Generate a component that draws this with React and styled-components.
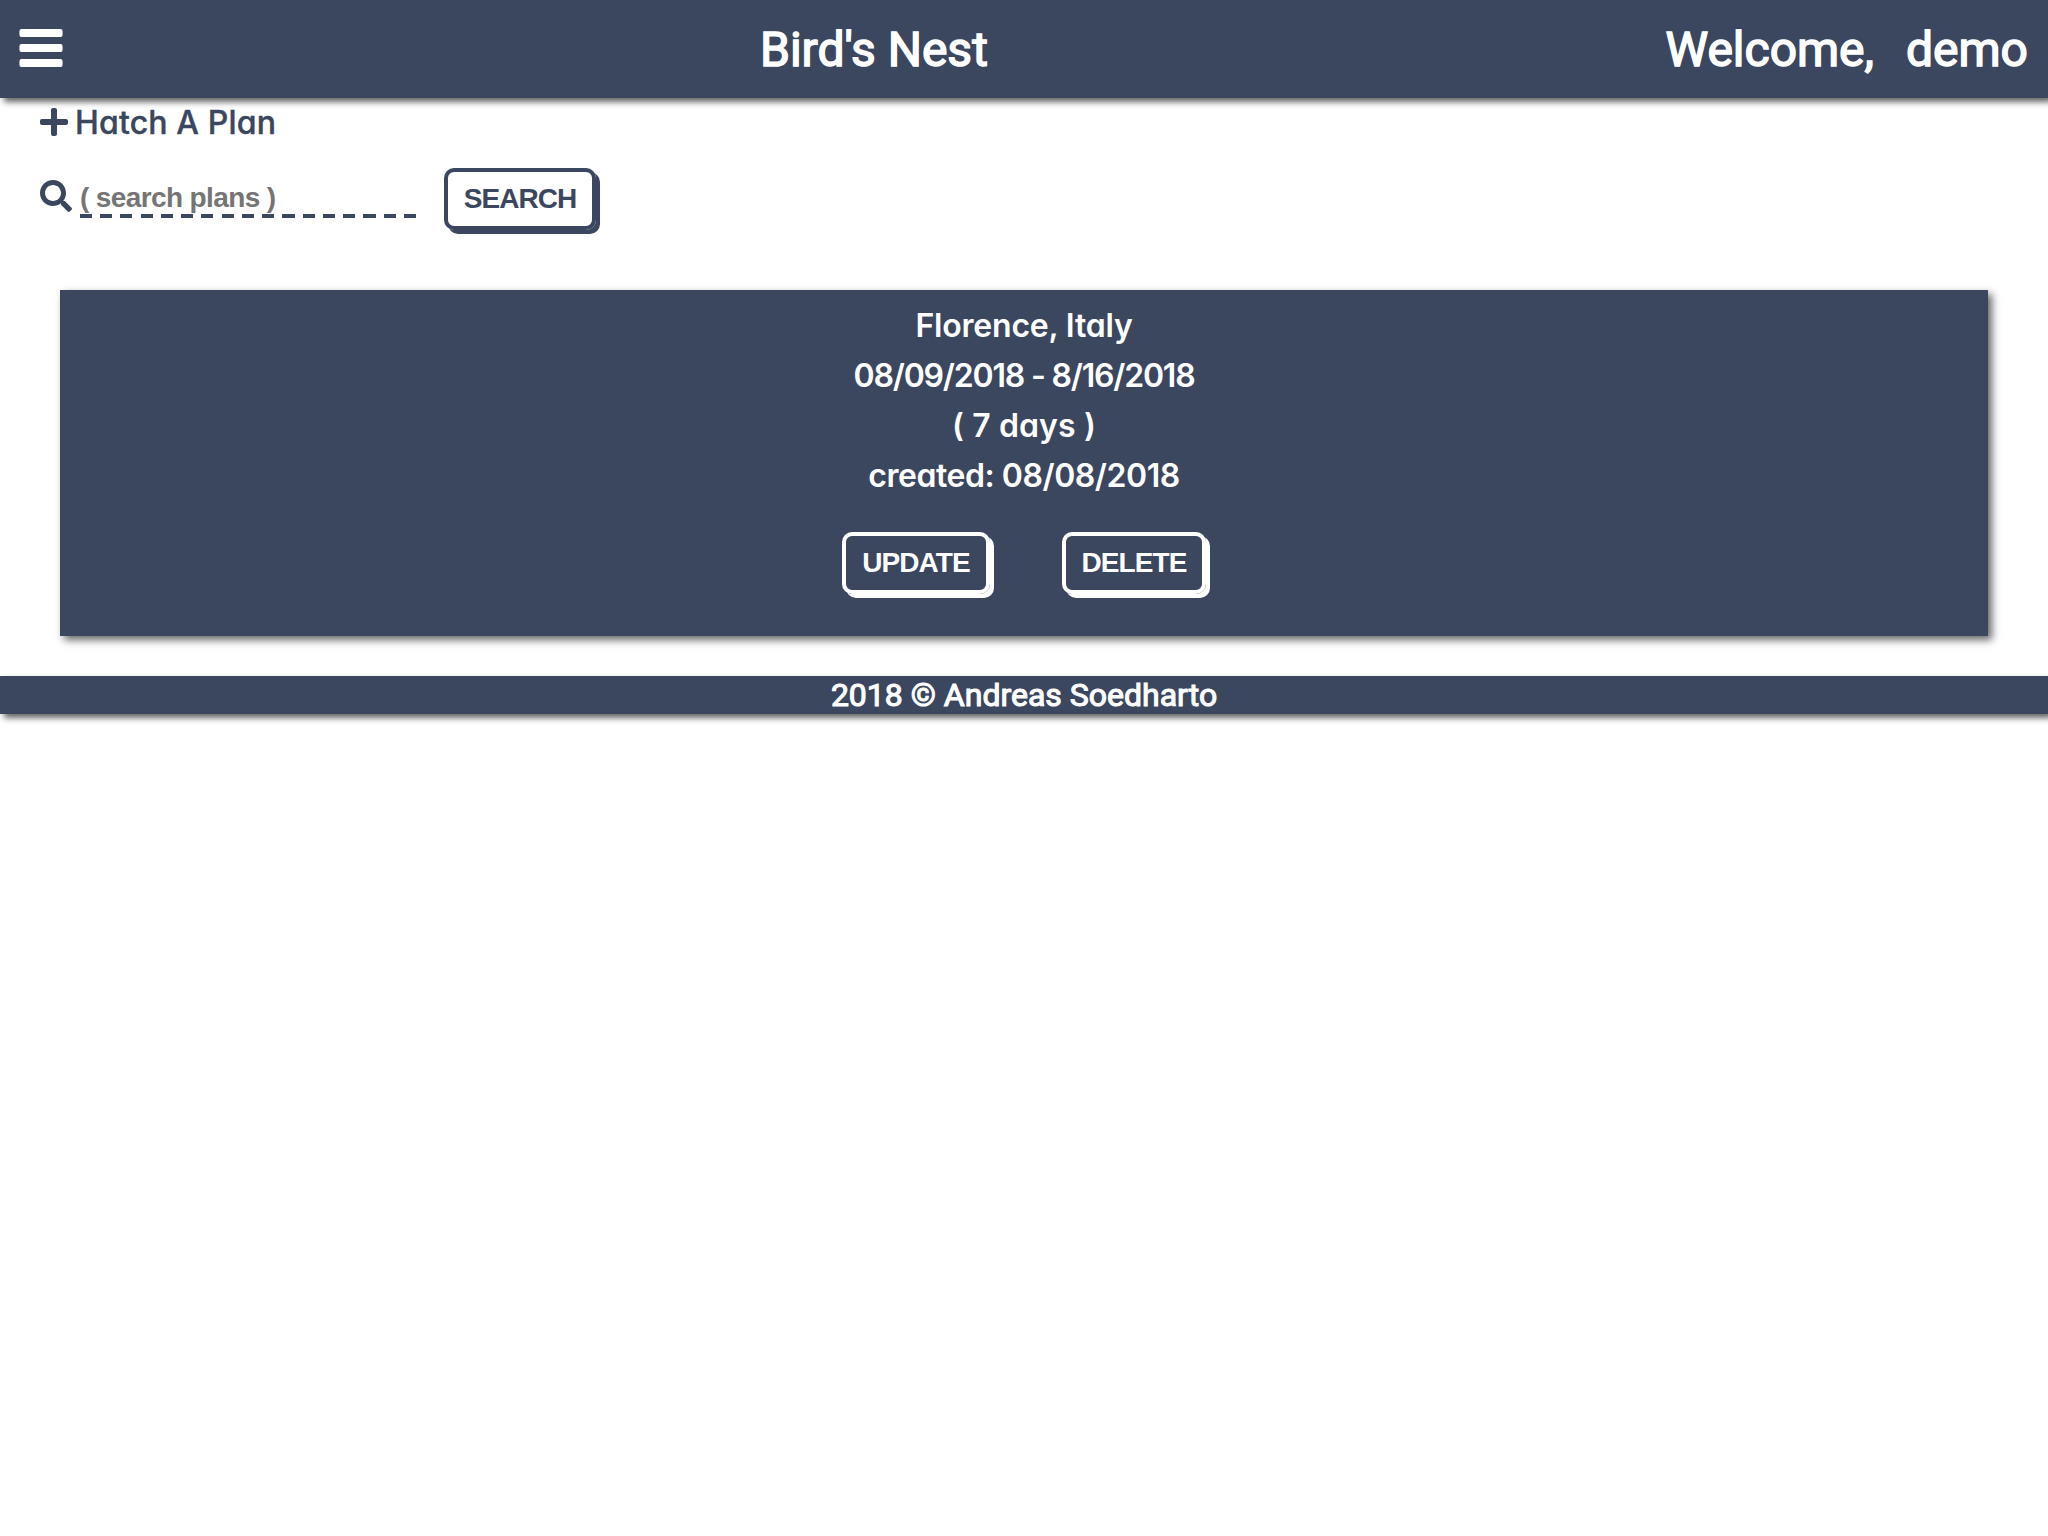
import React from "react";
import styled, { createGlobalStyle } from "styled-components";
import { FaPlus, FaSearch, FaBars } from "react-icons/fa";

const navy = "#3b465f";

const GlobalStyle = createGlobalStyle`
  * { box-sizing: border-box; }
  html { background: #fff; }
  body { margin: 0; min-height: 100vh; color: ${navy}; overflow-x: hidden; }
`;

const Header = styled.header`
  display: flex;
  align-items: center;
  height: 98px;
  padding: 0 20px;
  background: ${navy};
  color: #fff;
  font: 400 48px/56px Roboto, sans-serif;
  -webkit-text-stroke: 1.5px #fff;
  box-shadow: 4px 4px 6px #666;
`;

const MenuButton = styled.button`
  display: flex;
  padding: 0 0 2px;
  border: 0;
  background: none;
  color: #fff;
  svg { width: 42px; height: 48px; overflow: visible; stroke: #fff; stroke-width: 12px; }
`;

const Title = styled.div`
  margin-left: 698px;
  padding-top: 2px;
  white-space: nowrap;
`;

const Greeting = styled.div`
  display: flex;
  gap: 32px;
  margin-left: auto;
  padding-top: 2px;
`;

const HatchLink = styled.a`
  display: flex;
  align-items: center;
  gap: 7px;
  height: 48px;
  padding-left: 40px;
  font: 500 32px/48px Inter, sans-serif;
  font-feature-settings: "cv11";
  -webkit-text-stroke: 0.4px ${navy};
  letter-spacing: ${(p) => p.$track}px;
  white-space: nowrap;
  svg { width: 28px; height: 32px; }
  span { padding-top: 2px; }
`;

const SearchForm = styled.form`
  display: flex;
  align-items: flex-start;
  height: 66px;
  margin-top: 22px;
  padding-left: 40px;
`;

const SearchIcon = styled(FaSearch)`
  width: 32px;
  height: 32px;
  margin-top: 12px;
`;

const SearchInput = styled.input`
  width: 336px;
  height: 36px;
  margin: 14px 28px 0 8px;
  padding: 0 0 4px;
  border: 0;
  outline: 0;
  color: ${navy};
  font: 700 28px/32px "Liberation Sans", sans-serif;
  letter-spacing: -0.62px;
  background: repeating-linear-gradient(90deg, ${navy} 0 12px, transparent 12px 20.25px) left bottom / 100% 4px no-repeat;
  &::placeholder { color: #757575; opacity: 1; }
`;

const Button = styled.button`
  width: ${(p) => p.$width}px;
  height: 62px;
  padding: 0 0 1px;
  border: 4px solid currentColor;
  border-radius: 10px;
  background: transparent;
  color: ${(p) => (p.$light ? "#fff" : navy)};
  font: 700 28px/32px "Liberation Sans", sans-serif;
  letter-spacing: -0.93px;
  box-shadow: 4px 4px 0 currentColor;
`;

const Card = styled.section`
  display: flex;
  flex-direction: column;
  align-items: center;
  height: 346px;
  margin: 56px 60px 40px;
  padding-top: 11px;
  background: ${navy};
  color: #fff;
  box-shadow: 4px 4px 8px #666;
`;

const PlanLine = styled.div`
  height: 50px;
  font: 600 32px/50px Inter, sans-serif;
  font-feature-settings: "cv11";
  letter-spacing: ${(p) => p.$track}px;
  white-space: nowrap;
`;

const Actions = styled.div`
  display: flex;
  gap: 72px;
  margin-top: 31px;
`;

const Footer = styled.footer`
  height: 38px;
  background: ${navy};
  color: #fff;
  font: 400 32px/38px Roboto, sans-serif;
  -webkit-text-stroke: 1.1px #fff;
  text-align: center;
  box-shadow: 4px 4px 6px #666;
`;

const plan = [
  { text: "Florence, Italy", track: -0.2 },
  { text: "08/09/2018 - 8/16/2018", track: -1.2 },
  { text: "( 7 days )", track: 0.1 },
  { text: "created: 08/08/2018", track: -0.45 },
];

export default function App() {
  return (
    <>
      <GlobalStyle />
      <Header>
        <MenuButton aria-label="Menu"><FaBars /></MenuButton>
        <Title>Bird's Nest</Title>
        <Greeting><span>Welcome,</span><span>demo</span></Greeting>
      </Header>
      <HatchLink $track={0.15}><FaPlus /><span>Hatch A Plan</span></HatchLink>
      <SearchForm onSubmit={(e) => e.preventDefault()}>
        <SearchIcon />
        <SearchInput placeholder="( search plans )" />
        <Button $width={152}>SEARCH</Button>
      </SearchForm>
      <Card>
        {plan.map((line) => (
          <PlanLine key={line.text} $track={line.track}>{line.text}</PlanLine>
        ))}
        <Actions>
          <Button $light $width={148}>UPDATE</Button>
          <Button $light $width={144}>DELETE</Button>
        </Actions>
      </Card>
      <Footer>2018 © Andreas Soedharto</Footer>
    </>
  );
}
